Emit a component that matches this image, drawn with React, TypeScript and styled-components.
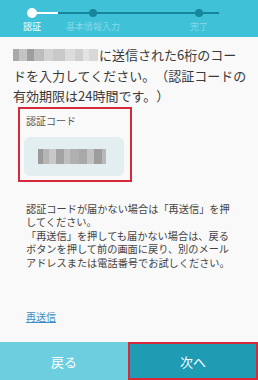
import React from "react";
import styled, { createGlobalStyle } from "styled-components";

const Global = createGlobalStyle`
  html, body { margin: 0; padding: 0; }
  body {
    background: #f9f9f9;
    font-family: "Noto Sans CJK JP", "Noto Sans", sans-serif;
    text-spacing-trim: space-all;
  }
  * { box-sizing: border-box; }
`;

const Screen = styled.div`
  width: 258px;
  height: 380px;
  display: flex;
  flex-direction: column;
  background: #f9f9f9;
  overflow: hidden;
`;

const Header = styled.div`
  height: 37px;
  background: #3fc1d7;
  position: relative;
  flex-shrink: 0;
`;

const TrackLine = styled.div`
  position: absolute;
  top: 12px;
  left: 32px;
  width: 187px;
  height: 2px;
  background: #17869d;
`;

const TrackDone = styled.div`
  width: 26px;
  height: 2px;
  background: #ffffff;
`;

const Steps = styled.div`
  position: relative;
  display: grid;
  grid-template-columns: 40px 60px 40px;
  column-gap: 11px;
  padding-left: 12px;
  padding-top: 8px;
  & > :nth-child(3) {
    margin-left: 65px;
  }
`;

const Step = styled.div`
  display: flex;
  flex-direction: column;
  align-items: center;
`;

const Dot = styled.div<{ $active?: boolean }>`
  width: ${(p) => (p.$active ? 10 : 8)}px;
  height: ${(p) => (p.$active ? 10 : 8)}px;
  margin-top: ${(p) => (p.$active ? 0 : 1)}px;
  margin-bottom: ${(p) => (p.$active ? 0 : 1)}px;
  border-radius: 50%;
  background: ${(p) => (p.$active ? "#ffffff" : "#17869d")};
`;

const StepLabel = styled.div<{ $active?: boolean }>`
  margin-top: 3px;
  font-size: 9px;
  line-height: 11px;
  white-space: nowrap;
  color: ${(p) => (p.$active ? "#ffffff" : "#86d9e7")};
`;

const Content = styled.div`
  flex: 1;
  padding: 8px 10px 0 13px;
  display: flex;
  flex-direction: column;
  align-items: flex-start;
`;

const Lead = styled.p`
  margin: 0;
  font-size: 13px;
  line-height: 20.5px;
  color: #3a3a3a;
`;

const Blur = styled.span`
  display: inline-flex;
  vertical-align: -1px;
  height: 12px;
  margin-right: 1px;
`;

const Px = styled.span<{ $w: number; $c: string }>`
  width: ${(p) => p.$w}px;
  height: 100%;
  background: ${(p) => p.$c};
`;

const CodeField = styled.div`
  margin: 0 0 0 5px;
  width: 114px;
  height: 75px;
  border: 2px solid #d8283c;
  padding: 6px 6px 4px 4px;
  display: flex;
  flex-direction: column;
`;

const FieldLabel = styled.div`
  font-size: 10px;
  line-height: 12px;
  color: #555555;
  padding-left: 2px;
`;

const InputBox = styled.div`
  margin-top: 10px;
  flex: 1;
  border-radius: 6px;
  background: #e3eef0;
  display: flex;
  align-items: center;
  padding-left: 14px;
`;

const InputBlur = styled.span`
  display: inline-flex;
  height: 15px;
`;

const Note = styled.p`
  margin: 20px 0 0 13px;
  width: 206px;
  font-size: 10.2px;
  line-height: 13.6px;
  color: #444444;
`;

const Resend = styled.a`
  display: block;
  margin: 42px 0 0 13px;
  font-size: 10px;
  line-height: 12px;
  color: #3c8ec2;
  text-decoration: underline;
`;

const Footer = styled.div`
  height: 38px;
  display: grid;
  grid-template-columns: 128px 130px;
  flex-shrink: 0;
`;

const Button = styled.button<{ $primary?: boolean }>`
  border: ${(p) => (p.$primary ? "2px solid #d8283c" : "none")};
  background: ${(p) => (p.$primary ? "#1f9bb4" : "#6dcee0")};
  color: #ffffff;
  font-family: inherit;
  font-size: 13px;
  margin: 0;
  padding: 0;
  cursor: pointer;
`;

const blurA: [number, string][] = [
  [6, "#a9a9a9"],
  [8, "#c4c4c4"],
  [7, "#9e9e9e"],
  [10, "#bdbdbd"],
  [9, "#d3d3d3"],
  [12, "#c9c9c9"],
  [10, "#dcdcdc"],
  [8, "#cfcfcf"],
  [6, "#e3e3e3"],
  [9, "#d8d8d8"],
];

const blurB: [number, string][] = [
  [5, "#9a9a9a"],
  [6, "#b5b5b5"],
  [7, "#c8c8c8"],
  [8, "#a3a3a3"],
  [6, "#bfbfbf"],
  [9, "#b0b0b0"],
  [8, "#a8a8a8"],
  [7, "#c2c2c2"],
  [8, "#9d9d9d"],
  [4, "#b8b8b8"],
];

export default function App() {
  return (
    <>
      <Global />
      <Screen>
        <Header>
          <TrackLine>
            <TrackDone />
          </TrackLine>
          <Steps>
            <Step>
              <Dot $active />
              <StepLabel $active>認証</StepLabel>
            </Step>
            <Step>
              <Dot />
              <StepLabel>基本情報入力</StepLabel>
            </Step>
            <Step>
              <Dot />
              <StepLabel>完了</StepLabel>
            </Step>
          </Steps>
        </Header>
        <Content>
          <Lead>
            <Blur>
              {blurA.map(([w, c], i) => (
                <Px key={i} $w={w} $c={c} />
              ))}
            </Blur>
            に送信された6桁のコードを入力してください。（認証コードの有効期限は24時間です。）
          </Lead>
          <CodeField>
            <FieldLabel>認証コード</FieldLabel>
            <InputBox>
              <InputBlur>
                {blurB.map(([w, c], i) => (
                  <Px key={i} $w={w} $c={c} />
                ))}
              </InputBlur>
            </InputBox>
          </CodeField>
          <Note>
            認証コードが届かない場合は「再送信」を押してください。
            <br />
            「再送信」を押しても届かない場合は、戻るボタンを押して前の画面に戻り、別のメールアドレスまたは電話番号でお試しください。
          </Note>
          <Resend href="#">再送信</Resend>
        </Content>
        <Footer>
          <Button>戻る</Button>
          <Button $primary>次へ</Button>
        </Footer>
      </Screen>
    </>
  );
}
